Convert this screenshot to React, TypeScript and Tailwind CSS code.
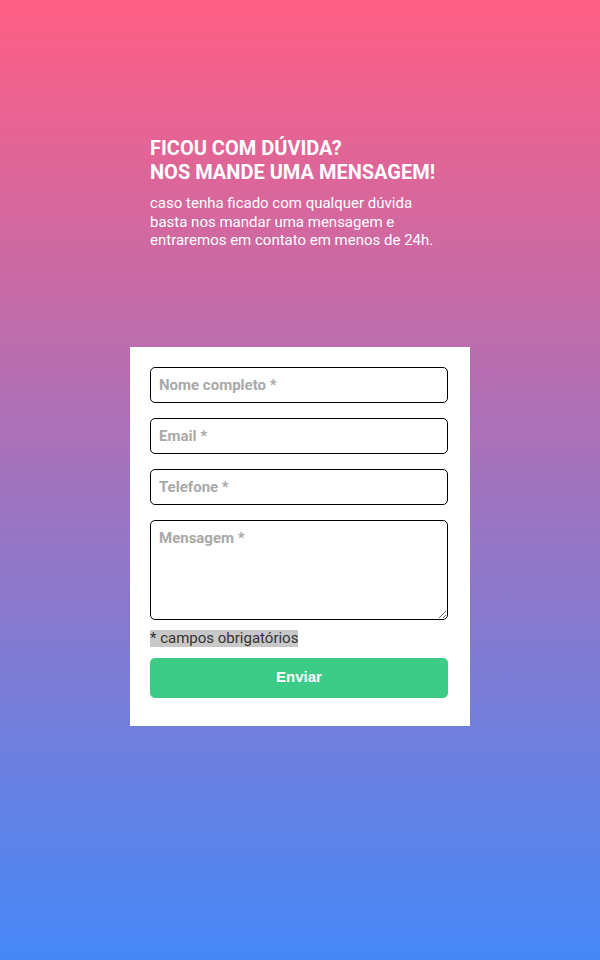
import React from "react";

export default function App() {
  const inputCls =
    "block w-[298px] h-[36px] rounded-[5px] border border-black bg-white px-[8px] text-[15px] font-bold text-[#333] placeholder:text-[#a9a9a9] outline-none";
  return (
    <div
      className="w-full h-[960px] flex flex-col items-center bg-[linear-gradient(to_bottom,#ff5e84,#4588f8)]"
      style={{ fontFamily: "Roboto, 'Noto Sans', sans-serif" }}
    >
      <div className="w-[300px] mt-[136px] text-white">
        <h1 className="text-[20px] leading-[24px] font-bold uppercase">
          Ficou com dúvida?
          <br />
          Nos mande uma mensagem!
        </h1>
        <p className="mt-[10px] text-[15px] leading-[18.5px] w-[290px]">
          caso tenha ficado com qualquer dúvida basta nos mandar uma mensagem e entraremos em contato em menos de 24h.
        </p>
      </div>
      <form className="mt-[97px] w-[340px] bg-white px-[20px] pt-[20px] pb-[28px] flex flex-col">
        <input className={inputCls} placeholder="Nome completo *" />
        <input className={inputCls + " mt-[15px]"} placeholder="Email *" />
        <input className={inputCls + " mt-[15px]"} placeholder="Telefone *" />
        <textarea
          className="block mt-[15px] w-[298px] h-[100px] rounded-[5px] border border-black bg-white px-[8px] py-[6px] text-[15px] font-bold text-[#333] placeholder:text-[#a9a9a9] outline-none"
          placeholder="Mensagem *"
        />
        <div className="mt-[10px] w-fit bg-[#c8c8c8] text-[#333] text-[15px] leading-[17px]">
          * campos obrigatórios
        </div>
        <button
          type="button"
          className="mt-[11px] h-[40px] w-[298px] rounded-[5px] bg-[#3ccc88] text-white font-bold text-[15px]"
          style={{ fontFamily: "'Liberation Sans', Arial, sans-serif" }}
        >
          Enviar
        </button>
      </form>
    </div>
  );
}
